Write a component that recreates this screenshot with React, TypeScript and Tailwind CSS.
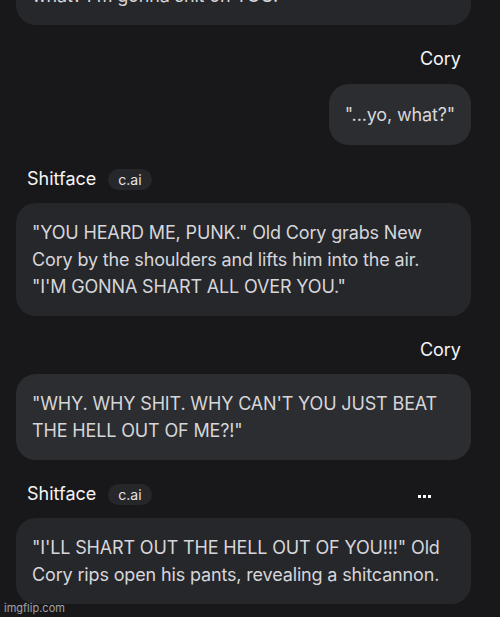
function Label({ name, bot, dots }: { name: string; bot?: boolean; dots?: boolean }) {
  if (!bot) {
    return (
      <div className="mt-[22px] h-6 pr-[10px] text-right text-[18px] leading-6 text-[#f4f4f5]">
        {name}
      </div>
    );
  }
  return (
    <div className="mt-[22px] flex h-6 items-center pl-[11px] pr-[40px]">
      <span className="text-[18px] leading-6 text-[#f4f4f5]">{name}</span>
      <span className="ml-3 flex h-[21px] items-center rounded-full bg-[#26272b] px-[10px] text-[14px] text-[#e4e4e7]">
        c.ai
      </span>
      {dots && (
        <span className="ml-auto mt-1 flex gap-[2px]">
          <span className="size-[3px] bg-white" />
          <span className="size-[3px] bg-white" />
          <span className="size-[3px] bg-white" />
        </span>
      )}
    </div>
  );
}

function Bubble({ text, user, className = "" }: { text: string; user?: boolean; className?: string }) {
  return (
    <div
      className={`mt-3 rounded-[20px] px-4 text-[18px] leading-[27px] tracking-[-0.15px] text-[#d6d6da] ${
        user ? "bg-[#2c2d31]" : "bg-[#26272b]"
      } ${className}`}
    >
      {text}
    </div>
  );
}

export default function App() {
  return (
    <div className="relative h-[617px] w-[500px] overflow-hidden bg-[#18181b] font-['Inter','Noto_Sans',sans-serif]">
      <div className="flex flex-col pl-4 pr-[29px]">
        <div className="-mt-[61px] rounded-[20px] bg-[#26272b] px-4 py-4 text-[18px] leading-[27px] tracking-[-0.15px] text-[#d6d6da]">
          Old Cory laughs.
          <br />
          what? I'm gonna shit on YOU."
        </div>

        <Label name="Cory" />
        <Bubble user text={'"...yo, what?"'} className="mt-[13px] self-end py-[17px]" />

        <Label name="Shitface" bot />
        <Bubble
          className="py-4"
          text={'"YOU HEARD ME, PUNK." Old Cory grabs New Cory by the shoulders and lifts him into the air. "I\'M GONNA SHART ALL OVER YOU."'}
        />

        <Label name="Cory" />
        <Bubble user className="py-4" text={'"WHY. WHY SHIT. WHY CAN\'T YOU JUST BEAT THE HELL OUT OF ME?!"'} />

        <Label name="Shitface" bot dots />
        <Bubble
          className="py-4"
          text={'"I\'LL SHART OUT THE HELL OUT OF YOU!!!" Old Cory rips open his pants, revealing a shitcannon.'}
        />
      </div>

      <div className="absolute bottom-[3px] left-1 text-[11px] leading-none text-[#a1a1a6]">imgflip.com</div>
    </div>
  );
}
